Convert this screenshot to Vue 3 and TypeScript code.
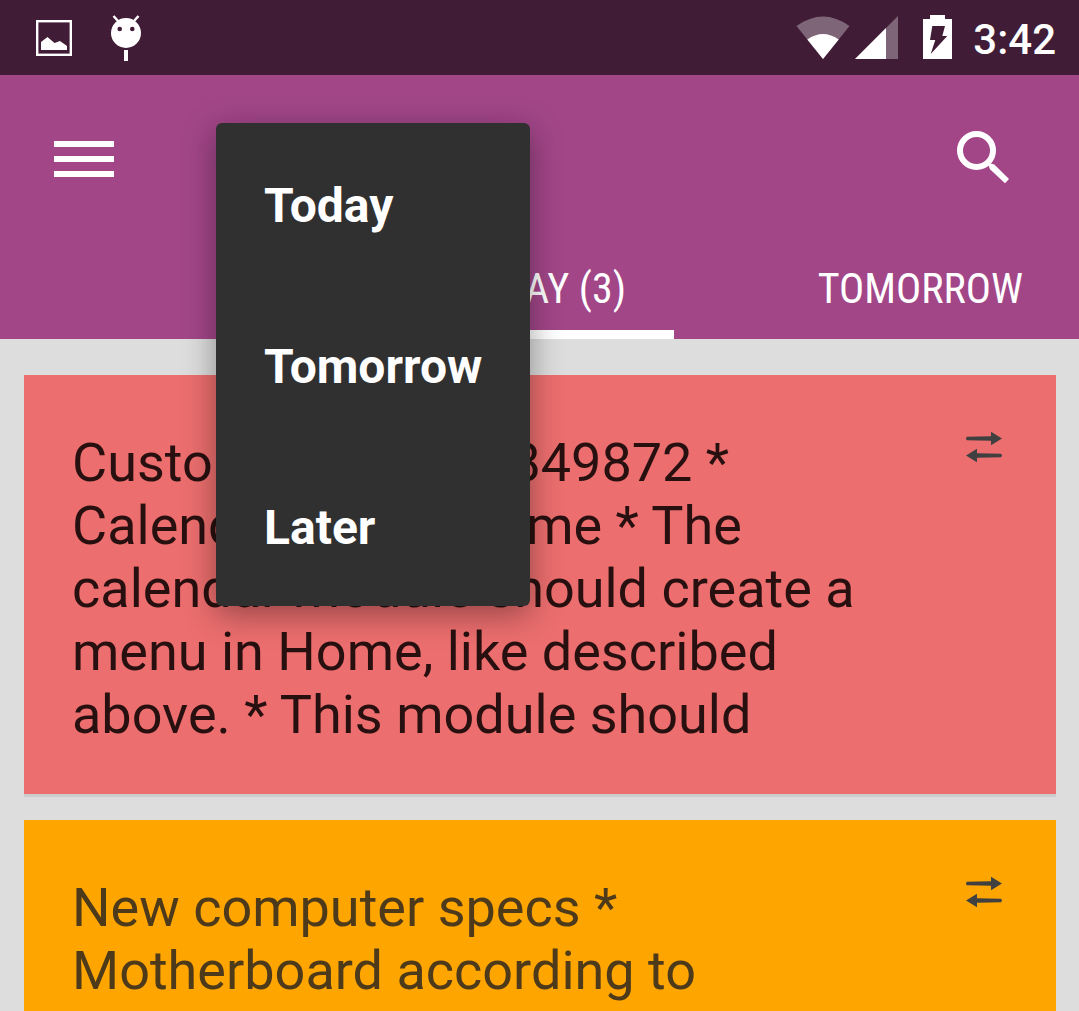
<script setup lang="ts">
interface Task {
  id: number
  text: string
  tone: 'urgent' | 'normal'
}

const menuItems: string[] = ['Today', 'Tomorrow', 'Later']

const tasks: Task[] = [
  {
    id: 1,
    tone: 'urgent',
    text: 'Customer event: #849872 *\nCalendar with a Home * The\ncalendar module should create a\nmenu in Home, like described\nabove. * This module should',
  },
  {
    id: 2,
    tone: 'normal',
    text: 'New computer specs *\nMotherboard according to',
  },
]
</script>

<template>
  <div class="screen">
    <div class="status">
      <svg class="picture" width="36" height="36" viewBox="0 0 36 36" aria-hidden="true">
        <rect x="1.2" y="1.2" width="33.6" height="33.6" fill="none" stroke="#fff" stroke-width="2.4" />
        <path d="M5 30V22L11.500 17L18.500 23L24 21L31 26V30Z" fill="#fff" />
      </svg>
      <svg class="droid" width="32" height="48" viewBox="0 0 32 48" aria-hidden="true">
        <path d="M3.500 2L8 7M28.500 2L24 7" stroke="#fff" stroke-width="2.500" />
        <circle cx="16" cy="19" r="15" fill="#fff" />
        <circle cx="9.700" cy="15" r="2.300" fill="#401c36" />
        <circle cx="22.300" cy="15" r="2.300" fill="#401c36" />
        <rect x="14" y="36" width="4" height="11" fill="#fff" />
      </svg>
      <span class="spacer"></span>
      <svg class="wifi" width="54" height="44" viewBox="0 0 54 44" aria-hidden="true">
        <path d="M0.500 10Q27-9 53.500 10L27 43Z" fill="#7f6578" />
        <path d="M11.300 23.500Q27 12.500 42.700 23.500L27 43Z" fill="#fff" />
      </svg>
      <svg class="signal" width="43" height="43" viewBox="0 0 43 43" aria-hidden="true">
        <path d="M43 0V43H0Z" fill="#7f6578" />
        <path d="M31 12V43H0Z" fill="#fff" />
      </svg>
      <svg class="battery" width="29" height="44" viewBox="0 0 29 44" aria-hidden="true">
        <path d="M7 0H22V4H29V44H0V4H7Z" fill="#fff" />
        <path d="M9.300 11H22L19.300 21H24.300L7.700 39L12.300 25H7Z" fill="#401c36" />
      </svg>
      <time class="clock">3:42</time>
    </div>

    <header class="header">
      <div class="toolbar">
        <button class="icon-button" type="button" aria-label="Open navigation">
          <svg width="60" height="36" viewBox="0 0 60 36" aria-hidden="true">
            <path d="M0 0H60V6H0ZM0 15H60V21H0ZM0 30H60V36H0Z" fill="#fff" />
          </svg>
        </button>
        <button class="icon-button" type="button" aria-label="Search">
          <svg width="53" height="56" viewBox="0 0 53 56" aria-hidden="true">
            <circle cx="19.500" cy="19.500" r="16.500" fill="none" stroke="#fff" stroke-width="6" />
            <path d="M31 33L33.700 32.500L37.300 33.500L52 48L48 52.300L33 38.300Z" fill="#fff" />
          </svg>
        </button>
      </div>
      <nav class="tabs">
        <a class="tab current" href="#today" aria-current="page">TODAY (3)</a>
        <a class="tab next" href="#tomorrow">TOMORROW</a>
      </nav>
    </header>

    <main class="list">
      <article v-for="task in tasks" :key="task.id" class="card" :class="task.tone">
        <p class="text">{{ task.text }}</p>
        <button class="move" type="button" aria-label="Move task">
          <svg width="36" height="32" viewBox="0 -1 36 32" fill="#404040" aria-hidden="true">
            <path d="M1 4.800L25 4.200V-0.300L36 6.500L25 13.300V8.800L1 8.300Q-1 6.500 1 4.800Z" />
            <path d="M35 21.700L11 21.200V16.700L0 23.500L11 30.300V25.800L35 25.200Q37 23.500 35 21.700Z" />
          </svg>
        </button>
      </article>
    </main>

    <div class="menu" role="menu">
      <button v-for="item in menuItems" :key="item" class="menu-item" type="button" role="menuitem">
        {{ item }}
      </button>
    </div>
  </div>
</template>

<style>
body {
  margin: 0;
  background: #dddddd;
}
</style>

<style scoped>
.screen {
  position: relative;
  height: 100vh;
  overflow: hidden;
  background: #dddddd;
  font-family: Roboto, "Liberation Sans", sans-serif;
}

button {
  border: 0;
  padding: 0;
  background: none;
  font: inherit;
}

svg {
  display: block;
}

.status {
  display: flex;
  align-items: center;
  height: 75px;
  padding: 0 23px 0 36px;
  box-sizing: border-box;
  background: #401c36;
}

.droid {
  margin-left: 38px;
}

.spacer {
  flex: 1;
}

.signal {
  margin-left: 5px;
}

.battery {
  margin: 0 21px 2px 25px;
}

.clock {
  color: #fff;
  font-size: 42px;
  font-weight: 500;
  line-height: 48px;
  padding-top: 4px;
}

.header {
  display: flex;
  flex-direction: column;
  height: 264px;
  background: #a24688;
}

.toolbar {
  display: flex;
  align-items: center;
  justify-content: space-between;
  height: 168px;
  padding: 0 69px 0 54px;
}

.tabs {
  flex: 1;
  display: grid;
  grid-template-columns: 1fr auto 1fr;
  padding-left: 2px;
}

.tab {
  padding: 5px 48px 0;
  color: #fff;
  font-family: "Roboto Condensed", "Liberation Sans Narrow", Roboto, sans-serif;
  font-size: 42px;
  line-height: 82px;
  text-decoration: none;
  white-space: nowrap;
}

.current {
  grid-column: 2;
  border-bottom: 9px solid #fff;
}

.next {
  justify-self: end;
  padding-right: 56px;
}

.list {
  display: flex;
  flex-direction: column;
  gap: 26px;
  padding: 36px 23px 36px 24px;
}

.card {
  display: flex;
  align-items: flex-start;
  justify-content: space-between;
  min-height: 419px;
  padding: 56px 54px 48px 48px;
  box-sizing: border-box;
  box-shadow: 0 3px 0 #cccccc;
}

.urgent {
  background: #ec6e6e;
  color: #27100f;
}

.normal {
  background: #ffa500;
  color: #4d3a1a;
}

.text {
  margin: 0;
  font-size: 54px;
  line-height: 63px;
  white-space: pre-line;
}

.menu {
  position: absolute;
  top: 123px;
  left: 216px;
  display: flex;
  flex-direction: column;
  border-radius: 6px;
  background: #303030;
  box-shadow: 0 8px 32px rgba(0, 0, 0, 0.38);
}

.menu-item {
  height: 161px;
  padding: 4px 48px 0;
  color: #fff;
  font-size: 48px;
  font-weight: 700;
  text-align: left;
}
</style>
